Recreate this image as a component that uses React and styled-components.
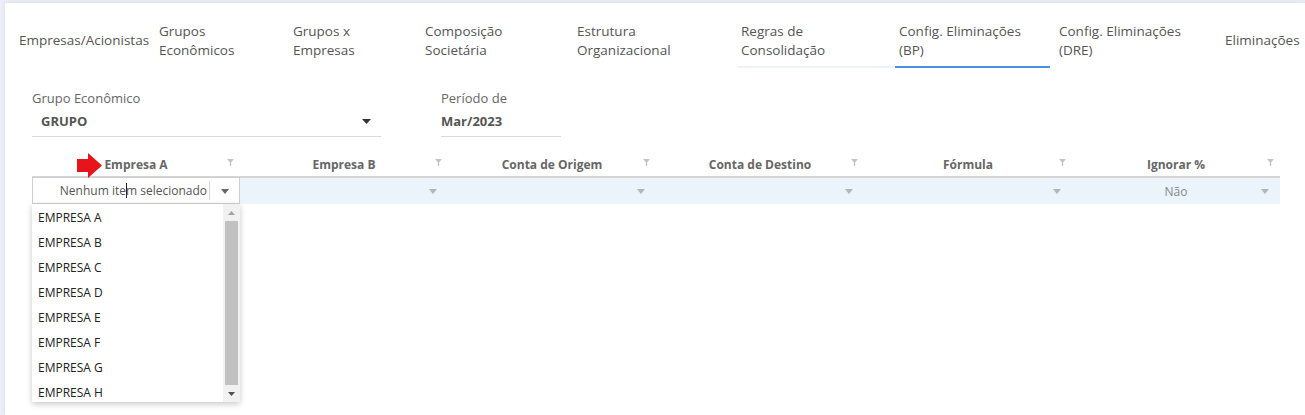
import React from "react"
import styled, { createGlobalStyle } from "styled-components"

const GlobalStyle = createGlobalStyle`
  html, body {
    margin: 0;
    padding: 0;
    background: #eceef8;
    font-family: "Open Sans", "Liberation Sans", sans-serif;
    overflow: hidden;
  }
`

const Card = styled.div`
  margin: 3px 0 0 5px;
  height: 412px;
  background: #fff;
  box-shadow: 0 0 4px rgba(120, 120, 170, 0.18);
  overflow: hidden;
`

const TabBar = styled.div`
  display: flex;
  padding-left: 10px;
  height: 65px;
  white-space: nowrap;
`

const Tab = styled.div`
  flex: 0 0 ${p => p.$w}px;
  box-sizing: border-box;
  display: flex;
  align-items: center;
  padding: 12px 4px 0;
  margin-right: ${p => (p.$active ? 5 : 0)}px;
  font-size: 13.5px;
  line-height: 19px;
  color: #555;
  white-space: pre-line;
  border-bottom: 2px solid
    ${p => (p.$active ? "#4b8fe6" : p.$hover ? "#eef3fb" : "transparent")};
`

const Form = styled.div`
  display: flex;
  gap: 60px;
  padding: 21px 0 0 27px;
`

const Field = styled.div`
  width: ${p => p.$w}px;
`

const Label = styled.div`
  font-size: 13px;
  line-height: 18px;
  color: #666;
`

const Value = styled.div`
  display: flex;
  align-items: center;
  justify-content: space-between;
  padding: 4px 10px 5px ${p => p.$pad}px;
  height: 20px;
  font-size: 13px;
  font-weight: 700;
  color: #555;
  border-bottom: 1px solid #d9d9e3;
`

const Grid = styled.div`
  position: relative;
  margin: 16px 25px 0 27px;
`

const HeaderRow = styled.div`
  display: grid;
  grid-template-columns: repeat(6, 1fr);
  height: 23px;
  border-bottom: 2px solid #d4d4d4;
`

const HeaderCell = styled.div`
  position: relative;
  display: flex;
  align-items: center;
  justify-content: center;
  font-size: 12px;
  font-weight: 700;
  color: #666;
`

const FilterIcon = styled.svg`
  position: absolute;
  right: 6px;
  top: 6px;
`

const FilterRow = styled.div`
  display: grid;
  grid-template-columns: repeat(6, 1fr);
  height: 26px;
  background: #ebf3fb;
`

const FilterCell = styled.div`
  position: relative;
  display: flex;
  align-items: center;
  justify-content: center;
  font-size: 12px;
  color: #888;
`

const Caret = styled.span`
  position: absolute;
  right: ${p => p.$right}px;
  top: 50%;
  margin-top: -2px;
  width: 0;
  height: 0;
  border-left: 4px solid transparent;
  border-right: 4px solid transparent;
  border-top: 5px solid ${p => p.$color || "#b5b5b5"};
`

const Editor = styled.div`
  display: flex;
  height: 27px;
  margin-top: -1px;
  box-sizing: border-box;
  background: #fff;
  border: 1px solid #cfcfcf;
`

const EditorText = styled.div`
  flex: 1;
  display: flex;
  align-items: center;
  justify-content: flex-end;
  padding-right: 2px;
  font-size: 12px;
  color: #555;
  border-right: 1px solid #d5d5d5;
  margin: 3px 0;
`

const Cursor = styled.span`
  display: inline-block;
  width: 1px;
  height: 15px;
  background: #222;
  margin: 0 -1px 0 0;
  vertical-align: middle;
`

const EditorButton = styled.div`
  position: relative;
  width: 29px;
`

const Dropdown = styled.div`
  position: absolute;
  left: 0;
  top: 51px;
  width: 208px;
  height: 198px;
  display: flex;
  background: #fff;
  box-shadow: 0 2px 6px rgba(0, 0, 0, 0.22);
`

const List = styled.div`
  flex: 1;
  padding-top: 1px;
`

const Item = styled.div`
  height: 25px;
  line-height: 25px;
  padding-left: 6px;
  font-size: 12px;
  color: #222;
`

const Scrollbar = styled.div`
  width: 17px;
  display: flex;
  flex-direction: column;
  align-items: center;
  background: #f1f1f1;
`

const ScrollArrow = styled.div`
  height: 17px;
  display: flex;
  align-items: center;
  justify-content: center;
`

const Thumb = styled.div`
  flex: 1;
  width: 13px;
  background: #c1c1c1;
`

const Arrow = styled.svg`
  position: absolute;
  left: 45px;
  top: 0;
`

const tabs = [
  { label: "Empresas/Acionistas", w: 140 },
  { label: "Grupos\nEconômicos", w: 134 },
  { label: "Grupos x\nEmpresas", w: 132 },
  { label: "Composição\nSocietária", w: 152 },
  { label: "Estrutura\nOrganizacional", w: 164 },
  { label: "Regras de\nConsolidação", w: 158, hover: true },
  { label: "Config. Eliminações\n(BP)", w: 155, active: true },
  { label: "Config. Eliminações\n(DRE)", w: 166 },
  { label: "Eliminações", w: 100 },
]

const columns = ["Empresa A", "Empresa B", "Conta de Origem", "Conta de Destino", "Fórmula", "Ignorar %"]

const empresas = ["A", "B", "C", "D", "E", "F", "G", "H"]

function Funnel() {
  return (
    <FilterIcon width="7" height="7" viewBox="0 0 7 7">
      <path d="M0 0h7L4.2 3.2V7H2.8V3.2z" fill="#c4c4c4" />
    </FilterIcon>
  )
}

export default function App() {
  return (
    <>
      <GlobalStyle />
      <Card>
        <TabBar>
          {tabs.map(t => (
            <Tab key={t.label} $w={t.w} $active={t.active} $hover={t.hover}>
              {t.label}
            </Tab>
          ))}
        </TabBar>

        <Form>
          <Field $w={349}>
            <Label>Grupo Econômico</Label>
            <Value $pad={9}>
              GRUPO
              <svg width="9" height="5" viewBox="0 0 9 5">
                <path d="M0 0h9L4.5 5z" fill="#333" />
              </svg>
            </Value>
          </Field>
          <Field $w={120}>
            <Label>Período de</Label>
            <Value $pad={0}>Mar/2023</Value>
          </Field>
        </Form>

        <Grid>
          <HeaderRow>
            {columns.map(c => (
              <HeaderCell key={c}>
                {c}
                <Funnel />
              </HeaderCell>
            ))}
          </HeaderRow>
          <FilterRow>
            <Editor>
              <EditorText>
                Nenhum ite<Cursor />m selecionado
              </EditorText>
              <EditorButton>
                <Caret $right={10} $color="#666" />
              </EditorButton>
            </Editor>
            {columns.slice(1).map((c, i) => (
              <FilterCell key={c}>
                {i === 4 ? "Não" : ""}
                <Caret $right={11} />
              </FilterCell>
            ))}
          </FilterRow>

          <Dropdown>
            <List>
              {empresas.map(e => (
                <Item key={e}>EMPRESA {e}</Item>
              ))}
            </List>
            <Scrollbar>
              <ScrollArrow>
                <svg width="7" height="4" viewBox="0 0 7 4">
                  <path d="M0 4h7L3.5 0z" fill="#a3a3a3" />
                </svg>
              </ScrollArrow>
              <Thumb />
              <ScrollArrow>
                <svg width="7" height="4" viewBox="0 0 7 4">
                  <path d="M0 0h7L3.5 4z" fill="#505050" />
                </svg>
              </ScrollArrow>
            </Scrollbar>
          </Dropdown>

          <Arrow width="26" height="25" viewBox="0 0 26 25">
            <path d="M0 6h11V0l14 12.5L11 25v-6H0z" fill="#e8141c" />
          </Arrow>
        </Grid>
      </Card>
    </>
  )
}
